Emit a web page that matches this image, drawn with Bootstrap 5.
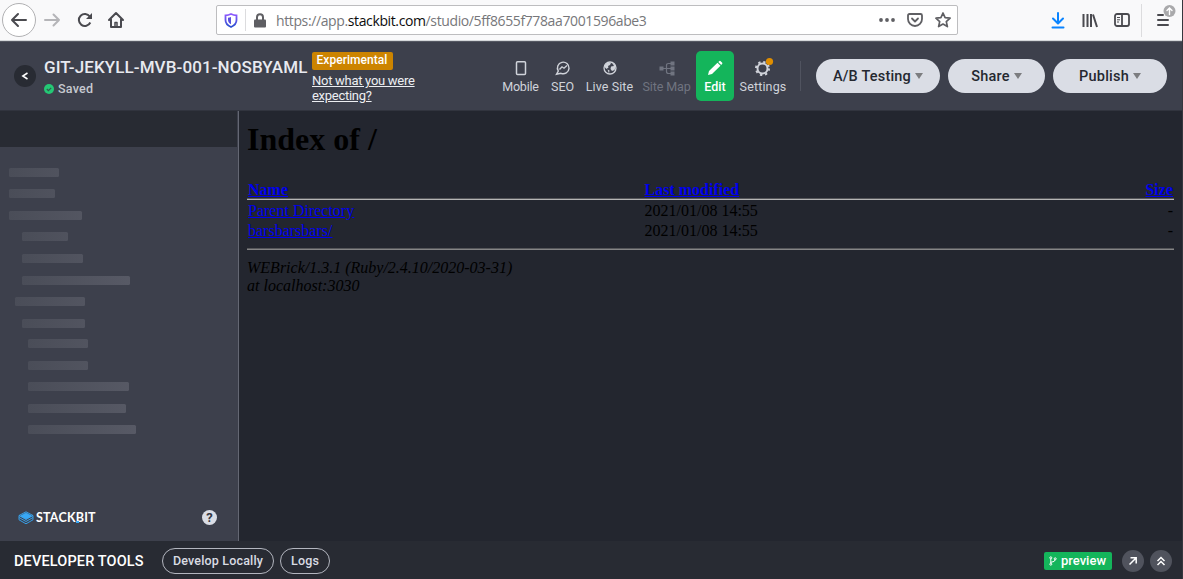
<!DOCTYPE html>
<html lang="en">
<head>
<meta charset="utf-8">
<title>Stackbit Studio</title>
<link href="https://cdn.jsdelivr.net/npm/bootstrap@5.3.0/dist/css/bootstrap.min.css" rel="stylesheet">
<script src="https://cdn.jsdelivr.net/npm/bootstrap@5.3.0/dist/js/bootstrap.bundle.min.js"></script>
<style>
body{width:1183px;height:579px;overflow:hidden;background:#23262f;border-right:1px solid #36373e;font-family:Roboto,"Open Sans",sans-serif;font-size:13px;line-height:15px;color:#dadde5}
svg{display:block;flex:none;fill:none;stroke:currentColor;overflow:visible}
a{color:inherit}
.browser{height:41px;background:#f9f9fa;border-bottom:1px solid #d5d7da;color:#4a4a4f}
.backbtn{width:34px;height:34px;margin-left:2px;border:1px solid #b1b1b3;background:#fff}
.urlbar{width:742px;height:30px;margin-left:92px;border:1px solid #bdbdbf;border-radius:2px;background:#fff;color:#5f5f63}
.url{font:14px/20px "Open Sans",sans-serif;color:#77777a;letter-spacing:-.38px;white-space:nowrap;padding-top:1px}
.url b{font-weight:400;color:#0c0c0d}
.vline{width:1px;background:#dcdcde}
.studio{height:70px;background:#3d404c;border-bottom:1px solid #31343e;border-top:1px solid #565963}
.circle{width:22px;height:22px;border-radius:50%}
.name{font-weight:500;font-size:17px;line-height:20px;letter-spacing:.1px;white-space:nowrap;color:#e8eaf0}
.projectcol{width:268px;margin-left:8px;padding-top:15px}
.saved{margin-left:4px;font-weight:500;font-size:12.5px;letter-spacing:.25px;color:#c6c9d0}
.expcol{width:112px;padding-top:10px;color:#eceef2;letter-spacing:-.28px}
.expbadge{width:81px;height:18px;background:#cc8400;color:#fff;border-radius:2px;font-weight:500;font-size:12px;letter-spacing:.05px;padding:0 4.5px;line-height:17px;margin-bottom:3px}
.toolitem{height:50px;padding-top:9px;border-radius:5px;white-space:nowrap;line-height:17px;font-size:12.5px;color:#d0d3da}
.toolitem svg{height:18px}
.pill{height:34px;border-radius:17px;background:#dadde5;color:#252830;font-weight:500;font-size:14.5px;letter-spacing:.2px}
.caret{width:0;height:0;margin-left:4px;border:4px solid transparent;border-top:6px solid #7c7d80;border-bottom:0}
.sidebar{width:239px;background:#3d404c;border-right:1px solid #646773}
.sidehead{height:36px;width:237px;background:#282b33}
.bars{padding-top:20.7px}
.skel{height:9px;border-radius:1.5px;background:linear-gradient(90deg,#4a4d58,#5a5c68) 0 0/130px 9px;margin-bottom:12.6px}
.listing{font:16px/18px "Liberation Serif",serif;color:#000;padding:10px 8px 0 8px}
.listing h1{font:bold 32px/36px "Liberation Serif",serif;margin:0 0 24px}
.listing a{color:#00e}
.listing .row>*{padding:0 1px}
.headrow{height:17px}
.c1{width:396.5px}.c2{width:300px}
.rule{height:2px;border-top:1px solid #55565a;background:#b4b4b4}
.dev{height:38px;background:#282b33;padding-top:1px}
.outline{height:26px;border:1px solid #b3b6bf;border-radius:13px;font-weight:500;color:#d9dce3;font-size:12.5px;letter-spacing:.17px}
.logo{font:700 12.5px/14px Lato,sans-serif;color:#fff;letter-spacing:.2px}
</style>
</head>
<body class="d-flex flex-column">
<div class="browser d-flex align-items-center flex-shrink-0">
  <div class="backbtn rounded-circle d-flex align-items-center justify-content-center"><svg width="18" height="16" stroke-width="2" stroke-linecap="round" stroke-linejoin="round"><path d="M2 8h14M8 2L2 8l6 6"/></svg></div>
  <svg class="ms-2" style="color:#b5b5b8" width="18" height="16" stroke-width="2" stroke-linecap="round" stroke-linejoin="round"><path d="M1 8h14M9.500 2.500L15 8l-5.500 5.500"/></svg>
  <svg width="16" height="16" style="margin-left:15px" stroke-width="2"><path d="M13.300 10.500A6 6 0 1 1 12.800 4.500"/><path d="M15 1v6H9z" fill="currentColor" stroke="none"/></svg>
  <svg width="16" height="16" style="margin-left:15px" stroke-width="2" stroke-linejoin="round" stroke-linecap="round"><path d="M1 8l7-7 7 7M3 7.500V15h10V7.500"/><path d="M7 14.500V10.500h2v4" stroke-width="1.500"/></svg>
  <div class="urlbar d-flex align-items-center">
    <svg width="14" height="15" style="margin-left:7px" stroke-width="1.800"><defs><linearGradient id="g" x2="0" y2="1"><stop stop-color="#9059ff"/><stop offset="1" stop-color="#2a50cf"/></linearGradient></defs><path stroke="url(#g)" d="M7 1C5 2 3 2.300 1.500 2.300V7c0 3.500 2.300 5.600 5.500 7 3.200-1.400 5.500-3.500 5.500-7V2.300C11 2.300 9 2 7 1z"/><path d="M7 4c-1 .5-2 .6-3 .7V7c0 2 1.200 3.300 3 4.200z" fill="#5a50e0" stroke="none"/></svg>
    <div class="vline" style="height:22px;margin-left:7px"></div>
    <svg width="12" height="15" style="margin-left:8px"><path d="M3 7V4.300a3 3 0 0 1 6 0V7" stroke-width="2"/><rect y="6.500" width="12" height="8" rx="1" fill="currentColor" stroke="none"/></svg>
    <div class="url" style="margin-left:10px">https://app.<b>stackbit.com</b>/studio/5ff8655f778aa7001596abe3</div>
    <svg class="ms-auto" width="16" height="4"><g fill="currentColor" stroke="none"><circle cx="2" cy="2" r="1.900"/><circle cx="8" cy="2" r="1.900"/><circle cx="14" cy="2" r="1.900"/></g></svg>
    <svg width="16" height="16" style="margin-left:12px" stroke-width="1.800" stroke-linecap="round" stroke-linejoin="round"><path d="M2.500 2h11q1.500 0 1.500 1.500V7a7 7 0 0 1-14 0V3.500Q1 2 2.500 2zM5 6.500l3 3 3-3"/></svg>
    <svg width="16" height="16" style="margin:0 6px 0 12px" stroke-width="1.700" stroke-linejoin="round"><path d="M8 1l2.100 4.700 5 .5-3.800 3.400 1.100 5L8 12l-4.400 2.600 1.100-5L.9 6.200l5-.5z"/></svg>
  </div>
  <svg width="14" height="17" style="margin-left:93px;color:#0a84ff" stroke-width="2" stroke-linecap="round" stroke-linejoin="round"><path d="M7 1v10M2 6.500L7 11.500l5-5M1.500 15.500h11"/></svg>
  <svg width="16" height="15" style="margin-left:17px"><path d="M1.500 1v13M5.500 1v13M9 1v13M11 1.500l4 12.500" stroke-width="2"/></svg>
  <svg width="16" height="14" style="margin-left:16px" stroke-width="1.800"><rect x="1" y="1" width="14" height="12" rx="2"/><path d="M8 1v12"/><path d="M3 4.500h3M3 6.800h3M3 9h2" stroke-width="1"/></svg>
  <div class="vline" style="height:33px;margin-left:11px"></div>
  <svg width="22" height="26" style="margin-left:14px;margin-top:-9px" stroke-width="2" stroke-linecap="round"><path d="M2 12h5M2 17h10M2 22h10"/><circle cx="13.500" cy="8" r="6" fill="#a9a9ab" stroke="none"/><path d="M13.500 11.500v-6M11 7.500L13.500 5 16 7.500" stroke="#fff" stroke-width="1.400"/></svg>
</div>

<div class="studio d-flex flex-shrink-0">
  <div class="circle d-flex align-items-center justify-content-center" style="margin:23px 0 0 14px;background:#282b33;color:#fff"><svg width="8" height="8" stroke-width="1.500"><path d="M6.500 1L1.800 4l4.700 3"/></svg></div>
  <div class="projectcol">
    <div class="name">GIT-JEKYLL-MVB-001-NOSBYAML</div>
    <div class="d-flex align-items-center" style="margin-top:4px"><svg width="10" height="10"><circle cx="5" cy="5" r="5" fill="#24c875" stroke="none"/><path d="M2.800 5l1.600 1.600L7.200 3.800" stroke="#315b4e" stroke-width="1.200"/></svg><span class="saved">Saved</span></div>
  </div>
  <div class="expcol"><div class="expbadge">Experimental</div><u>Not what you were<br>expecting?</u></div>
  <div class="d-flex" style="margin:9px 0 0 74px">
    <div class="toolitem d-flex flex-column align-items-center" style="width:45px"><svg width="12" height="18" stroke-width="1.500"><rect x="1.500" y="1.800" width="9" height="12.700" rx="1"/></svg><span style="letter-spacing:-.2px">Mobile</span></div>
    <div class="toolitem d-flex flex-column align-items-center" style="width:39px"><svg width="16" height="18" stroke-width="1.400"><path d="M3.300 11A5.800 5.800 0 1 1 6 13.300L1.500 14.300zM4.500 9.500l2.500-2.700 2 1.400L12 5.500"/></svg><span style="letter-spacing:-.1px">SEO</span></div>
    <div class="toolitem d-flex flex-column align-items-center" style="width:55px"><svg width="14" height="18" stroke-width="1.300"><circle cx="7" cy="8" r="6"/><path d="M2 5l3-2.500 3 .5-1 2-2 1 .5 1.500L3.500 9 1.500 7zM9 3l4 3-1.500 4-2.500 1-1.500-2 .5-2.500L11 6zM4.500 9.500l2 1-.5 3z" fill="currentColor" stroke="none"/></svg><span style="letter-spacing:.1px">Live Site</span></div>
    <div class="toolitem d-flex flex-column align-items-center" style="width:59px;color:#707480"><svg width="16" height="18" stroke-width="1.200"><path d="M1 8.500h12M13 3.500H9.500Q7.500 3.500 7.500 5.500v6q0 2 2 2H13"/><g fill="currentColor" stroke="none"><rect x=".5" y="6.500" width="4" height="4"/><rect x="11.500" y="1.500" width="4" height="4"/><rect x="11.500" y="6.500" width="4" height="4"/><rect x="11.500" y="11.500" width="4" height="4"/></g></svg><span style="letter-spacing:-.1px">Site Map</span></div>
    <div class="toolitem d-flex flex-column align-items-center" style="width:38px;background:#14b55b;color:#fff;font-weight:500"><svg width="16" height="18"><g fill="currentColor" stroke="none"><path d="M1 15l1-4L10.500 2.800l3 3L5 14zM11.300 2l1.200-1q.6-.4 1.200.2l1.500 1.500q.5.600 0 1.100L14.200 5z"/></g></svg>Edit</div>
    <div class="toolitem d-flex flex-column align-items-center" style="width:58px"><svg width="20" height="18" stroke-width="2"><circle cx="9.500" cy="8.500" r="5"/><circle cx="9.500" cy="8.500" r="6.500" stroke-dasharray="2.300 2.805"/><circle cx="16.500" cy="1.500" r="3.600" fill="#e08e00" stroke="none"/></svg><span style="letter-spacing:.15px">Settings</span></div>
  </div>
  <div style="width:1px;height:30px;margin:19px 15px 0 8px;background:#50535f"></div>
  <div class="d-flex gap-2" style="margin-top:17px">
    <div class="pill d-flex align-items-center justify-content-center" style="width:124px">A/B Testing<i class="caret"></i></div>
    <div class="pill d-flex align-items-center justify-content-center" style="width:97px">Share<i class="caret"></i></div>
    <div class="pill d-flex align-items-center justify-content-center" style="width:114px">Publish<i class="caret"></i></div>
  </div>
</div>

<div class="d-flex flex-grow-1">
  <div class="sidebar d-flex flex-column flex-shrink-0">
    <div class="sidehead"></div>
    <div class="bars">
      <div class="skel" style="width:50px;margin-left:9px"></div>
      <div class="skel" style="width:46px;margin-left:9px"></div>
      <div class="skel" style="width:73px;margin-left:9px"></div>
      <div class="skel" style="width:46px;margin-left:22px"></div>
      <div class="skel" style="width:61px;margin-left:22px"></div>
      <div class="skel" style="width:108px;margin-left:22px"></div>
      <div class="skel" style="width:70px;margin-left:15px"></div>
      <div class="skel" style="width:63px;margin-left:22px;margin-bottom:11.200px"></div>
      <div class="skel" style="width:60px;margin-left:28px"></div>
      <div class="skel" style="width:60px;margin-left:28px"></div>
      <div class="skel" style="width:101px;margin-left:28px"></div>
      <div class="skel" style="width:98px;margin-left:28px"></div>
      <div class="skel" style="width:108px;margin-left:28px"></div>
    </div>
    <div class="mt-auto d-flex align-items-center" style="padding:0 21px 16px 18px">
      <svg width="16" height="14" style="color:#38a8f5" stroke-width=".9"><path d="M8 2l5.500 3L8 8 2.500 5z" fill="currentColor"/><path d="M8 .8l7 3.700-7 4-7-4zM1 6.500l7 4 7-4M1 8.800l7 4 7-4M1 4.500v4.300M15 4.500v4.300"/></svg>
      <span class="logo" style="margin-left:2px">STACK<span class="position-relative">B<i style="position:absolute;left:0;bottom:2px;width:3px;height:2px;background:#38a8f5"></i></span>IT</span>
      <span class="ms-auto rounded-circle text-center" style="width:15px;height:15px;background:#dadde5;color:#343741;font-weight:700;font-size:13px;line-height:16px">?</span>
    </div>
  </div>
  <div class="listing flex-grow-1">
    <h1>Index of /</h1>
    <div class="row g-0 fw-bold headrow"><div class="c1"><a href="#">Name</a></div><div class="c2"><a href="#">Last modified</a></div><div class="col text-end"><a href="#">Size</a></div></div>
    <div class="rule" style="margin-bottom:2px"></div>
    <div class="row g-0" style="margin-bottom:2px"><div class="c1"><a href="#">Parent Directory</a></div><div class="c2">2021/01/08 14:55</div><div class="col text-end">-</div></div>
    <div class="row g-0"><div class="c1"><a href="#">barsbarsbars/</a></div><div class="c2">2021/01/08 14:55</div><div class="col text-end">-</div></div>
    <div class="rule" style="margin:8px 0 9px;background:#858586"></div>
    <address class="fst-italic m-0" style="line-height:18px">WEBrick/1.3.1 (Ruby/2.4.10/2020-03-31)<br>at localhost:3030</address>
  </div>
</div>

<div class="dev d-flex align-items-center flex-shrink-0">
  <span style="margin-left:14px;width:148px;padding-top:1px;font-weight:500;font-size:14.500px;letter-spacing:.14px;color:#fff">DEVELOPER TOOLS</span>
  <div class="outline d-flex align-items-center justify-content-center" style="width:112px">Develop Locally</div>
  <div class="outline d-flex align-items-center justify-content-center" style="width:50px;margin-left:6px">Logs</div>
  <div class="ms-auto d-flex align-items-center" style="width:68px;height:18px;background:#14b55b;border-radius:2px;color:#fff;font-weight:500;padding-left:5px"><svg width="8" height="10" stroke-width="1"><circle cx="1.800" cy="1.800" r="1"/><circle cx="1.800" cy="8.200" r="1"/><circle cx="6.200" cy="2.800" r="1"/><path d="M1.800 2.800v4.400M6.200 3.800q0 2-4.400 2.500"/></svg><span style="margin-left:4px">preview</span></div>
  <div class="circle d-flex align-items-center justify-content-center text-white" style="margin-left:10px;background:#50535d"><svg width="10" height="10" stroke-width="1.500"><path d="M1.500 8.500L8 2M2.500 1.800h5.700v5.700"/></svg></div>
  <div class="circle d-flex align-items-center justify-content-center text-white" style="margin:0 10px 0 6px;background:#50535d"><svg width="10" height="10" stroke-width="1.500"><path d="M1.500 5L5 1.500 8.500 5M1.500 9L5 5.500 8.500 9"/></svg></div>
</div>
</body>
</html>
